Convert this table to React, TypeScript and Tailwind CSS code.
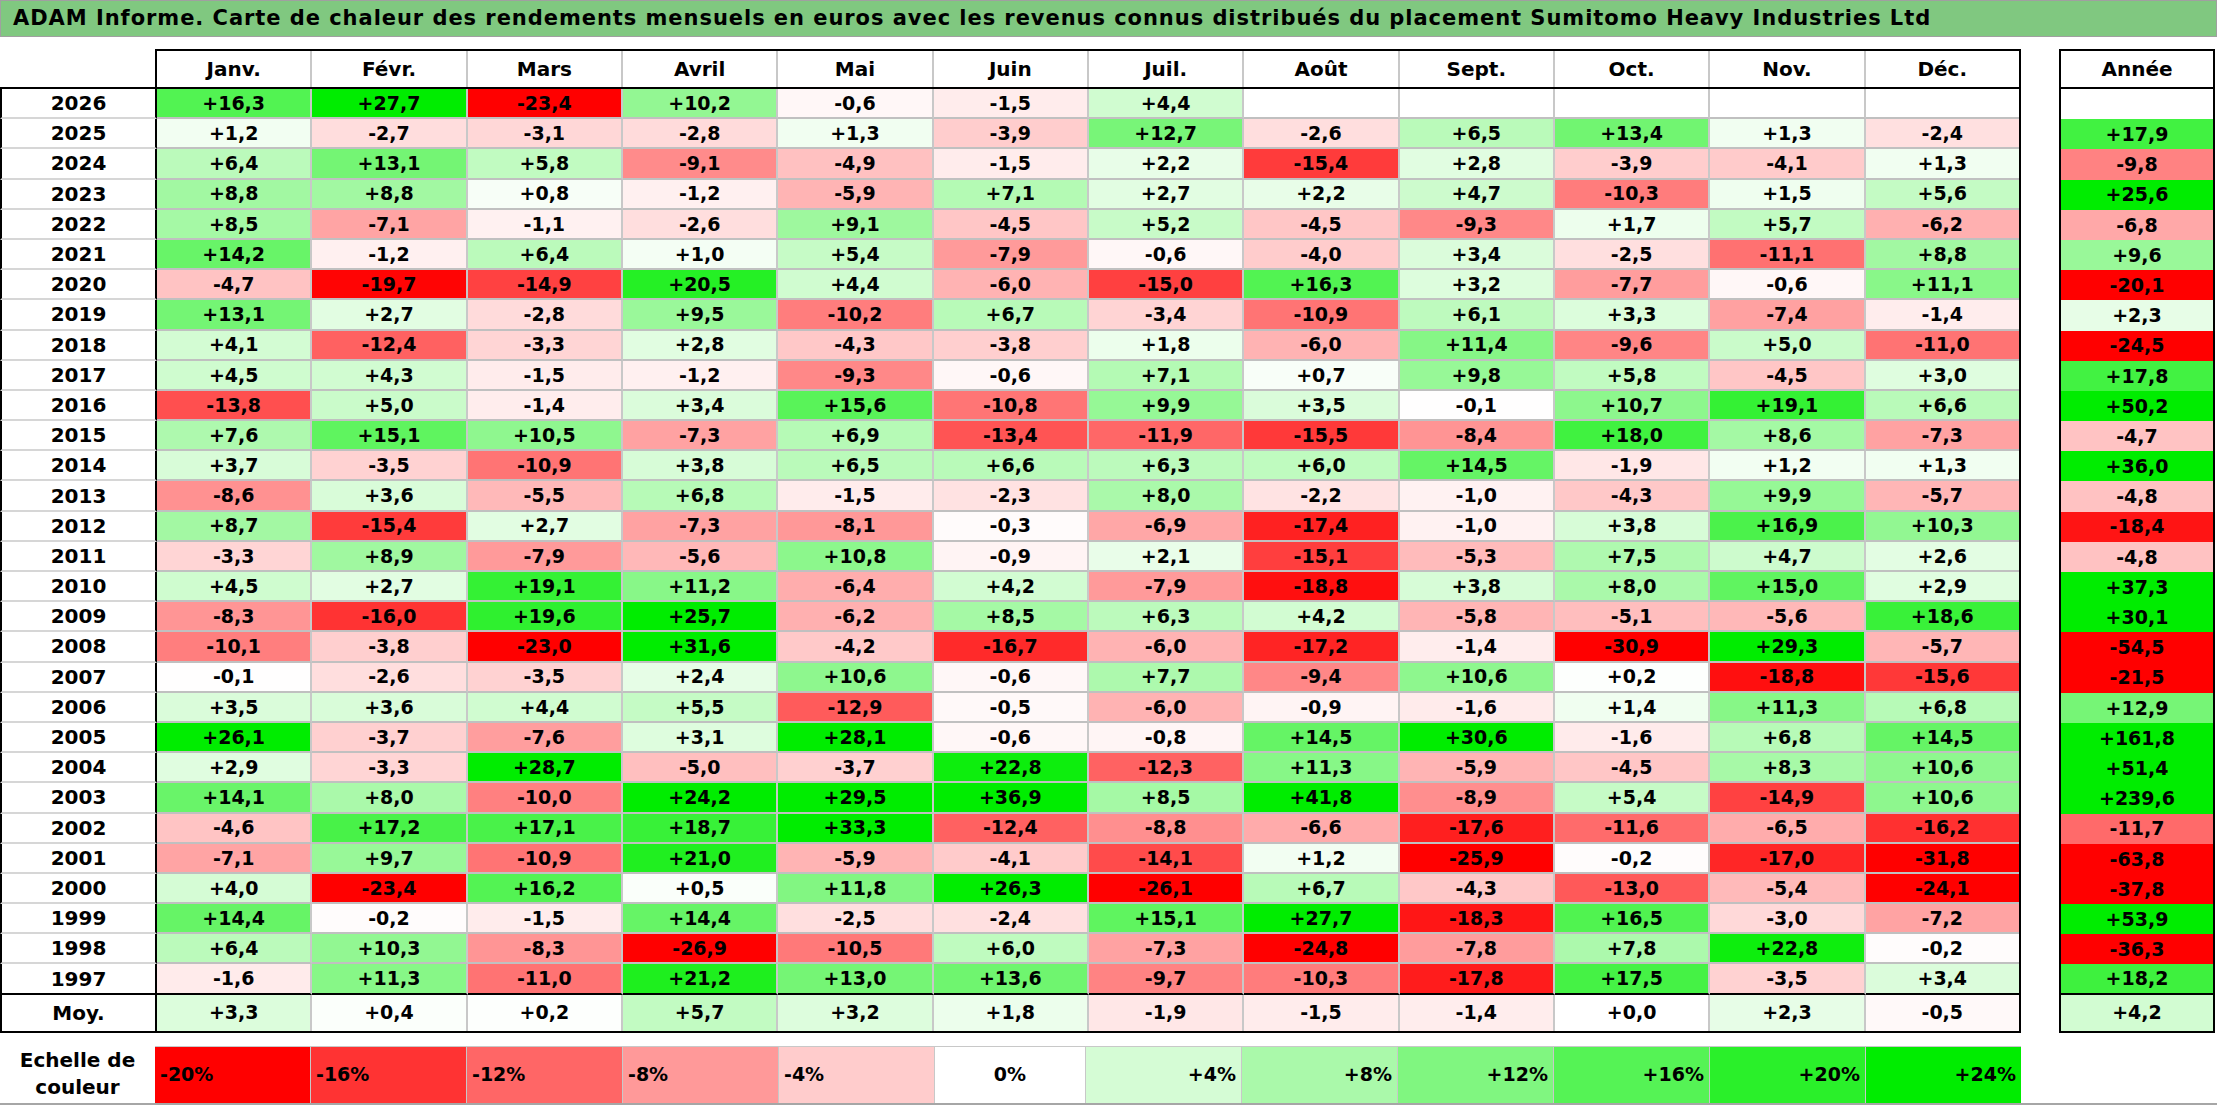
import React from "react";

const MONTHS = ["Janv.", "Févr.", "Mars", "Avril", "Mai", "Juin", "Juil.", "Août", "Sept.", "Oct.", "Nov.", "Déc."];

// année, puis 12 mois + total annuel ("." = vide)
const ROWS: [string, string][] = [
  ["2026", "+16,3 +27,7 -23,4 +10,2 -0,6 -1,5 +4,4 . . . . . ."],
  ["2025", "+1,2 -2,7 -3,1 -2,8 +1,3 -3,9 +12,7 -2,6 +6,5 +13,4 +1,3 -2,4 +17,9"],
  ["2024", "+6,4 +13,1 +5,8 -9,1 -4,9 -1,5 +2,2 -15,4 +2,8 -3,9 -4,1 +1,3 -9,8"],
  ["2023", "+8,8 +8,8 +0,8 -1,2 -5,9 +7,1 +2,7 +2,2 +4,7 -10,3 +1,5 +5,6 +25,6"],
  ["2022", "+8,5 -7,1 -1,1 -2,6 +9,1 -4,5 +5,2 -4,5 -9,3 +1,7 +5,7 -6,2 -6,8"],
  ["2021", "+14,2 -1,2 +6,4 +1,0 +5,4 -7,9 -0,6 -4,0 +3,4 -2,5 -11,1 +8,8 +9,6"],
  ["2020", "-4,7 -19,7 -14,9 +20,5 +4,4 -6,0 -15,0 +16,3 +3,2 -7,7 -0,6 +11,1 -20,1"],
  ["2019", "+13,1 +2,7 -2,8 +9,5 -10,2 +6,7 -3,4 -10,9 +6,1 +3,3 -7,4 -1,4 +2,3"],
  ["2018", "+4,1 -12,4 -3,3 +2,8 -4,3 -3,8 +1,8 -6,0 +11,4 -9,6 +5,0 -11,0 -24,5"],
  ["2017", "+4,5 +4,3 -1,5 -1,2 -9,3 -0,6 +7,1 +0,7 +9,8 +5,8 -4,5 +3,0 +17,8"],
  ["2016", "-13,8 +5,0 -1,4 +3,4 +15,6 -10,8 +9,9 +3,5 -0,1 +10,7 +19,1 +6,6 +50,2"],
  ["2015", "+7,6 +15,1 +10,5 -7,3 +6,9 -13,4 -11,9 -15,5 -8,4 +18,0 +8,6 -7,3 -4,7"],
  ["2014", "+3,7 -3,5 -10,9 +3,8 +6,5 +6,6 +6,3 +6,0 +14,5 -1,9 +1,2 +1,3 +36,0"],
  ["2013", "-8,6 +3,6 -5,5 +6,8 -1,5 -2,3 +8,0 -2,2 -1,0 -4,3 +9,9 -5,7 -4,8"],
  ["2012", "+8,7 -15,4 +2,7 -7,3 -8,1 -0,3 -6,9 -17,4 -1,0 +3,8 +16,9 +10,3 -18,4"],
  ["2011", "-3,3 +8,9 -7,9 -5,6 +10,8 -0,9 +2,1 -15,1 -5,3 +7,5 +4,7 +2,6 -4,8"],
  ["2010", "+4,5 +2,7 +19,1 +11,2 -6,4 +4,2 -7,9 -18,8 +3,8 +8,0 +15,0 +2,9 +37,3"],
  ["2009", "-8,3 -16,0 +19,6 +25,7 -6,2 +8,5 +6,3 +4,2 -5,8 -5,1 -5,6 +18,6 +30,1"],
  ["2008", "-10,1 -3,8 -23,0 +31,6 -4,2 -16,7 -6,0 -17,2 -1,4 -30,9 +29,3 -5,7 -54,5"],
  ["2007", "-0,1 -2,6 -3,5 +2,4 +10,6 -0,6 +7,7 -9,4 +10,6 +0,2 -18,8 -15,6 -21,5"],
  ["2006", "+3,5 +3,6 +4,4 +5,5 -12,9 -0,5 -6,0 -0,9 -1,6 +1,4 +11,3 +6,8 +12,9"],
  ["2005", "+26,1 -3,7 -7,6 +3,1 +28,1 -0,6 -0,8 +14,5 +30,6 -1,6 +6,8 +14,5 +161,8"],
  ["2004", "+2,9 -3,3 +28,7 -5,0 -3,7 +22,8 -12,3 +11,3 -5,9 -4,5 +8,3 +10,6 +51,4"],
  ["2003", "+14,1 +8,0 -10,0 +24,2 +29,5 +36,9 +8,5 +41,8 -8,9 +5,4 -14,9 +10,6 +239,6"],
  ["2002", "-4,6 +17,2 +17,1 +18,7 +33,3 -12,4 -8,8 -6,6 -17,6 -11,6 -6,5 -16,2 -11,7"],
  ["2001", "-7,1 +9,7 -10,9 +21,0 -5,9 -4,1 -14,1 +1,2 -25,9 -0,2 -17,0 -31,8 -63,8"],
  ["2000", "+4,0 -23,4 +16,2 +0,5 +11,8 +26,3 -26,1 +6,7 -4,3 -13,0 -5,4 -24,1 -37,8"],
  ["1999", "+14,4 -0,2 -1,5 +14,4 -2,5 -2,4 +15,1 +27,7 -18,3 +16,5 -3,0 -7,2 +53,9"],
  ["1998", "+6,4 +10,3 -8,3 -26,9 -10,5 +6,0 -7,3 -24,8 -7,8 +7,8 +22,8 -0,2 -36,3"],
  ["1997", "-1,6 +11,3 -11,0 +21,2 +13,0 +13,6 -9,7 -10,3 -17,8 +17,5 -3,5 +3,4 +18,2"],
];

const AVERAGE = "+3,3 +0,4 +0,2 +5,7 +3,2 +1,8 -1,9 -1,5 -1,4 +0,0 +2,3 -0,5 +4,2";

const SCALE = [-20, -16, -12, -8, -4, 0, 4, 8, 12, 16, 20, 24];

// white -> red down to -20%, white -> green up to +24%
function heat(v: number): string {
  if (v < 0) {
    const f = Math.min(-v / 20, 1);
    const c = Math.round(255 * (1 - f));
    return `rgb(255,${c},${c})`;
  }
  const f = Math.min(v / 24, 1);
  const c = Math.round(255 * (1 - f));
  const g = Math.round(255 - 18 * f);
  return `rgb(${c},${g},${c})`;
}

function cellBg(raw: string): string {
  if (raw === ".") return "#ffffff";
  return heat(parseFloat(raw.replace(",", ".")));
}

export default function App() {
  return (
    <div className="w-[2217px] h-[1105px] overflow-hidden bg-white text-black font-bold font-['DejaVu_Sans',sans-serif] border-b-2 border-[#a6a6a6]">
      {/* Title */}
      <div className="h-[37px] flex items-center pl-[12px] bg-[#80c880] border border-[#a0a0a0] text-[21px] tracking-[0.95px] leading-none whitespace-nowrap">
        ADAM Informe. Carte de chaleur des rendements mensuels en euros avec les revenus connus distribués du placement Sumitomo Heavy Industries Ltd
      </div>
      <div className="h-[12px]" />

      {/* Header */}
      <div className="flex h-[40px]">
        <div className="w-[155px] border-b-2 border-black" />
        <div className="w-[1866px] flex border-2 border-black">
          {MONTHS.map((m, i) => (
            <div
              key={m}
              className={`flex-1 flex items-center justify-center text-[20px] ${i < 11 ? "border-r-2 border-[#c8c8c8]" : ""}`}
            >
              {m}
            </div>
          ))}
        </div>
        <div className="w-[38px]" />
        <div className="w-[156px] flex items-center justify-center text-[20px] border-2 border-black">Année</div>
      </div>

      {/* Years */}
      {ROWS.map(([year, line], r) => {
        const cells = line.split(" ");
        const last = r === ROWS.length - 1;
        return (
          <div key={year} className="flex h-[30.2px]">
            <div
              className={`w-[157px] flex items-center justify-center text-[20px] border-x-2 border-x-black border-b-2 ${last ? "border-b-black" : "border-b-[#d6d6d6]"}`}
            >
              {year}
            </div>
            <div className="w-[1864px] flex border-r-2 border-black">
              {cells.slice(0, 12).map((c, i) => (
                <div
                  key={i}
                  style={{ background: cellBg(c) }}
                  className={`flex-1 flex items-center justify-center text-[19px] border-b-2 ${last ? "border-b-black" : "border-b-[#c0c0c0]"} ${i < 11 ? "border-r-2 border-r-[#c8c8c8]" : ""}`}
                >
                  {c === "." ? "" : c}
                </div>
              ))}
            </div>
            <div className="w-[38px]" />
            <div
              style={{ background: cellBg(cells[12]) }}
              className={`w-[156px] flex items-center justify-center text-[19px] border-x-2 border-black ${last ? "border-b-2" : ""}`}
            >
              {cells[12] === "." ? "" : cells[12]}
            </div>
          </div>
        );
      })}

      {/* Average */}
      <div className="flex h-[38px]">
        <div className="w-[157px] flex items-center justify-center text-[20px] border-x-2 border-b-2 border-black">Moy.</div>
        <div className="w-[1864px] flex border-r-2 border-b-2 border-black">
          {AVERAGE.split(" ").slice(0, 12).map((c, i) => (
            <div
              key={i}
              style={{ background: cellBg(c) }}
              className={`flex-1 flex items-center justify-center text-[19px] ${i < 11 ? "border-r-2 border-[#c8c8c8]" : ""}`}
            >
              {c}
            </div>
          ))}
        </div>
        <div className="w-[38px]" />
        <div
          style={{ background: cellBg("+4,2") }}
          className="w-[156px] flex items-center justify-center text-[19px] border-x-2 border-b-2 border-black"
        >
          +4,2
        </div>
      </div>
      <div className="h-[13px]" />

      {/* Colour scale */}
      <div className="flex h-[57px]">
        <div className="w-[155px] flex flex-col items-center justify-center text-[20px] leading-[27px]">
          <span>Echelle de</span>
          <span>couleur</span>
        </div>
        <div className="w-[1866px] flex border-t border-[#c8c8c8]">
          {SCALE.map((v, i) => (
            <div
              key={v}
              style={{ background: heat(v) }}
              className={`flex-1 flex items-center text-[19px] ${v < 0 ? "justify-start pl-[5px]" : v === 0 ? "justify-center" : "justify-end pr-[5px]"} ${i < 11 ? "border-r border-[#c8c8c8]" : ""}`}
            >
              {v > 0 ? `+${v}%` : `${v}%`}
            </div>
          ))}
        </div>
      </div>
    </div>
  );
}
